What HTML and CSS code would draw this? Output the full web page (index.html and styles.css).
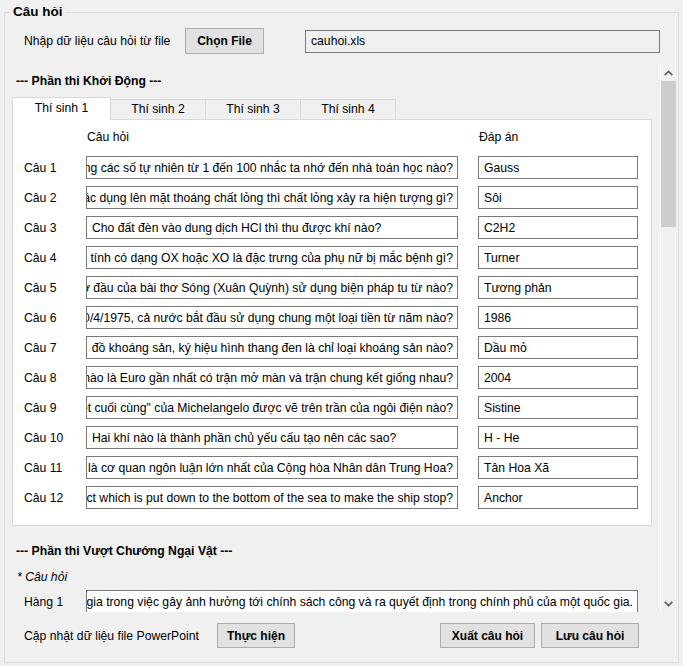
FILE: index.html
```html
<!DOCTYPE html>
<html lang="vi">
<head>
<meta charset="utf-8">
<title>Câu hỏi</title>
<link rel="stylesheet" href="styles.css">
</head>
<body>
<div class="group">
  <div class="group-title">Câu hỏi</div>
  <div class="file-row">
    <span class="file-label">Nhập dữ liệu câu hỏi từ file</span>
    <button class="btn btn-file">Chọn File</button>
    <div class="field readonly file-field"><span>cauhoi.xls</span></div>
  </div>

  <div class="scroll">
    <div class="scroll-view">
      <div class="section-title">--- Phần thi Khởi Động ---</div>
      <div class="tabs">
        <div class="tab tab-1 active">Thí sinh 1</div>
        <div class="tab">Thí sinh 2</div>
        <div class="tab">Thí sinh 3</div>
        <div class="tab">Thí sinh 4</div>
      </div>
      <div class="tab-panel">
        <div class="qa-head">
          <span class="col-head col-q">Câu hỏi</span>
          <span class="col-head col-a">Đáp án</span>
        </div>
        <div class="qa-grid">
          <span class="row-label">Câu 1</span>
          <div class="field end"><span>tổng các số tự nhiên từ 1 đến 100 nhắc ta nhớ đến nhà toán học nào?</span></div>
          <div class="field answer"><span>Gauss</span></div>

          <span class="row-label">Câu 2</span>
          <div class="field end"><span>tác dụng lên mặt thoáng chất lỏng thì chất lỏng xảy ra hiện tượng gì?</span></div>
          <div class="field answer"><span>Sôi</span></div>

          <span class="row-label">Câu 3</span>
          <div class="field"><span>Cho đất đèn vào dung dịch HCl thì thu được khí nào?</span></div>
          <div class="field answer"><span>C2H2</span></div>

          <span class="row-label">Câu 4</span>
          <div class="field end"><span>giới tính có dạng OX hoặc XO là đặc trưng của phụ nữ bị mắc bệnh gì?</span></div>
          <div class="field answer"><span>Turner</span></div>

          <span class="row-label">Câu 5</span>
          <div class="field end"><span>mở đầu của bài thơ Sóng (Xuân Quỳnh) sử dụng biện pháp tu từ nào?</span></div>
          <div class="field answer"><span>Tương phản</span></div>

          <span class="row-label">Câu 6</span>
          <div class="field end"><span>30/4/1975, cả nước bắt đầu sử dụng chung một loại tiền từ năm nào?</span></div>
          <div class="field answer"><span>1986</span></div>

          <span class="row-label">Câu 7</span>
          <div class="field end"><span>đồ khoáng sản, ký hiệu hình thang đen là chỉ loại khoáng sản nào?</span></div>
          <div class="field answer"><span>Dầu mỏ</span></div>

          <span class="row-label">Câu 8</span>
          <div class="field end"><span>nào là Euro gần nhất có trận mở màn và trận chung kết giống nhau?</span></div>
          <div class="field answer"><span>2004</span></div>

          <span class="row-label">Câu 9</span>
          <div class="field end"><span>xét cuối cùng" của Michelangelo được vẽ trên trần của ngôi điện nào?</span></div>
          <div class="field answer"><span>Sistine</span></div>

          <span class="row-label">Câu 10</span>
          <div class="field"><span>Hai khí nào là thành phần chủ yếu cấu tạo nên các sao?</span></div>
          <div class="field answer"><span>H - He</span></div>

          <span class="row-label">Câu 11</span>
          <div class="field end"><span>là cơ quan ngôn luận lớn nhất của Cộng hòa Nhân dân Trung Hoa?</span></div>
          <div class="field answer"><span>Tân Hoa Xã</span></div>

          <span class="row-label">Câu 12</span>
          <div class="field end"><span>object which is put down to the bottom of the sea to make the ship stop?</span></div>
          <div class="field answer"><span>Anchor</span></div>
        </div>
      </div>

      <div class="section-title section-2">--- Phần thi Vượt Chướng Ngại Vật ---</div>
      <div class="note">* Câu hỏi</div>
      <div class="row-grid">
        <span class="row-label">Hàng 1</span>
        <div class="field end"><span>gia trong việc gây ảnh hưởng tới chính sách công và ra quyết định trong chính phủ của một quốc gia.</span></div>
      </div>
    </div>
    <div class="vscroll">
      <div class="sb-btn"><svg width="9" height="6" viewBox="0 0 9 6"><polyline points="0.7,5.2 4.5,1.4 8.3,5.2" fill="none" stroke="#606060" stroke-width="1.7"/></svg></div>
      <div class="sb-thumb"></div>
      <div class="sb-track"></div>
      <div class="sb-btn"><svg width="9" height="6" viewBox="0 0 9 6"><polyline points="0.7,0.8 4.5,4.6 8.3,0.8" fill="none" stroke="#606060" stroke-width="1.7"/></svg></div>
    </div>
  </div>

  <div class="bottom-row">
    <span class="bottom-label">Cập nhật dữ liệu file PowerPoint</span>
    <button class="btn btn-run">Thực hiện</button>
    <button class="btn btn-export">Xuất câu hỏi</button>
    <button class="btn btn-save">Lưu câu hỏi</button>
  </div>
</div>
</body>
</html>
```

FILE: styles.css
```css
* {
  box-sizing: border-box;
}

html,
body {
  margin: 0;
  padding: 0;
}

body {
  width: 683px;
  height: 666px;
  overflow: hidden;
  background: #f0f0f0;
  color: #000;
  font-family: "Liberation Sans", Arial, sans-serif;
  font-size: 12.2px;
  line-height: 16px;
}

.group {
  margin: 12px 4px 0 4px;
  height: 651px;
  border: 1px solid #dcdcdc;
  display: flex;
  flex-direction: column;
}

.group-title {
  align-self: flex-start;
  margin: -9px 0 0 6px;
  padding: 0 2px;
  background: #f0f0f0;
  font-weight: bold;
  font-size: 13.5px;
  line-height: 16px;
}

/* file row */
.file-row {
  display: flex;
  align-items: center;
  height: 26px;
  margin: 8px 0 0 19px;
}

.file-label {
  width: 161px;
}

.btn {
  font-family: inherit;
  font-size: 12px;
  font-weight: bold;
  color: #000;
  background: #e1e1e1;
  border: 1px solid #adadad;
  border-radius: 0;
  padding: 0;
  margin: 0;
  height: 25px;
}

.btn-file {
  width: 79px;
  height: 26px;
}

.file-field {
  width: 355px;
  margin-left: 41px;
}

/* text fields */
.field {
  display: flex;
  align-items: center;
  height: 23px;
  overflow: hidden;
  white-space: nowrap;
  padding: 0 4px 0 5px;
  border: 1px solid #7a7a7a;
  background: #fff;
}

.field span {
  flex-shrink: 0;
}

.field.end {
  justify-content: flex-end;
}

.field.readonly {
  background: #f0f0f0;
}

/* scroll pane */
.scroll {
  display: flex;
  height: 548px;
  margin: 10px 1px 0 0;
}

.scroll-view {
  flex: 1;
  overflow: hidden;
  padding-top: 9px;
}

.section-title {
  font-weight: bold;
  padding-left: 11px;
  height: 16px;
}

.section-2 {
  margin-top: 17px;
}

.note {
  font-style: italic;
  padding-left: 12px;
  margin-top: 10px;
  height: 16px;
}

/* tabs */
.tabs {
  display: flex;
  align-items: flex-end;
  height: 22px;
  margin: 8px 0 0 7px;
}

.tab {
  width: 96px;
  height: 20px;
  margin-left: -1px;
  padding-top: 1px;
  text-align: center;
  border: 1px solid #d9d9d9;
  border-bottom: none;
  background: #f0f0f0;
}

.tab.tab-1 {
  width: 99px;
  margin-left: 0;
}

.tab.active {
  position: relative;
  z-index: 1;
  height: 23px;
  margin-bottom: -1px;
  padding-top: 2px;
  background: #fff;
}

.tab-panel {
  width: 640px;
  margin-left: 7px;
  background: #fff;
  border: 1px solid #d9d9d9;
  padding: 9px 0 16px 11px;
}

.qa-head {
  display: grid;
  grid-template-columns: 62px 372px 20px 160px;
  height: 16px;
  margin-bottom: 11px;
}

.col-head {
  padding-left: 1px;
}

.col-q {
  grid-column: 2;
}

.col-a {
  grid-column: 4;
}

.qa-grid {
  display: grid;
  grid-template-columns: 62px 372px 180px;
  grid-auto-rows: 23px;
  row-gap: 7px;
  align-items: center;
}

.field.answer {
  margin-left: 20px;
}

.row-grid {
  display: grid;
  grid-template-columns: 62px 552px;
  grid-auto-rows: 23px;
  row-gap: 7px;
  align-items: center;
  margin: 5px 0 0 19px;
}

/* vertical scrollbar */
.vscroll {
  width: 17px;
  border-left: 1px solid #fff;
  display: flex;
  flex-direction: column;
  padding-right: 1px;
}

.sb-btn {
  height: 17px;
  display: flex;
  align-items: center;
  justify-content: center;
}

.sb-thumb {
  height: 146px;
  background: #cdcdcd;
}

.sb-track {
  flex: 1;
}

/* bottom row */
.bottom-row {
  display: flex;
  align-items: center;
  height: 25px;
  margin: 11px 39px 0 19px;
}

.bottom-label {
  width: 193px;
}

.btn-run {
  width: 78px;
}

.btn-export {
  width: 95px;
  margin-left: auto;
}

.btn-save {
  width: 98px;
  margin-left: 6px;
}
```
